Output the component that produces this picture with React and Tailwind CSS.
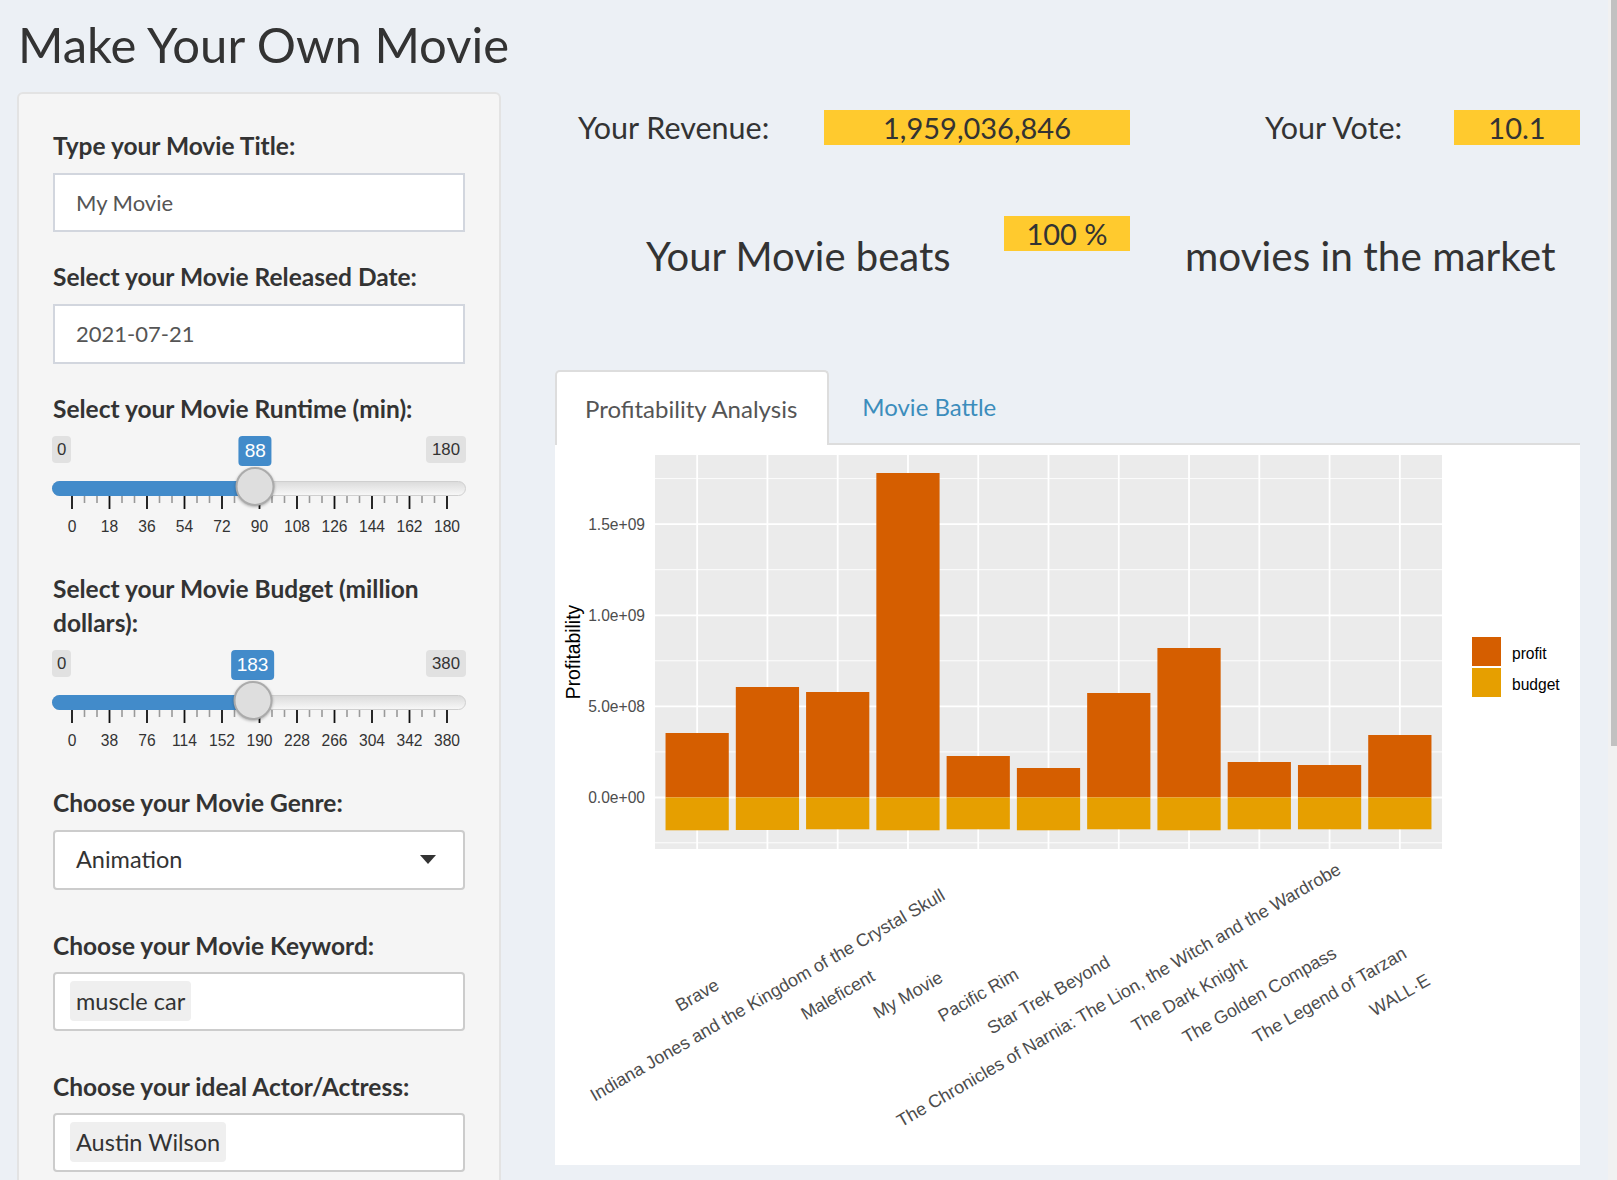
import React from 'react';

const movies = [
  { name: 'Brave', top: 731, bottom: 828.3 },
  { name: 'Indiana Jones and the Kingdom of the Crystal Skull', top: 685, bottom: 828 },
  { name: 'Maleficent', top: 690, bottom: 827.3 },
  { name: 'My Movie', top: 471, bottom: 828.3 },
  { name: 'Pacific Rim', top: 754, bottom: 827.3 },
  { name: 'Star Trek Beyond', top: 766, bottom: 828.3 },
  { name: 'The Chronicles of Narnia: The Lion, the Witch and the Wardrobe', top: 691, bottom: 827.3 },
  { name: 'The Dark Knight', top: 646, bottom: 828.3 },
  { name: 'The Golden Compass', top: 760, bottom: 827.3 },
  { name: 'The Legend of Tarzan', top: 763, bottom: 827.3 },
  { name: 'WALL·E', top: 733, bottom: 827.3 },
];

const Label = ({ children }) => (
  <label className="block text-[24.5px] font-bold leading-[34px] text-[#333]">{children}</label>
);

// ion.rangeSlider look-alike
const Slider = ({ min, max, value, ticks }) => {
  const frac = (value - min) / (max - min);
  const hx = 19 + 375 * frac;
  return (
    <div className="relative h-[108px] w-[412px]">
      <span className="absolute left-[-1px] top-0 h-[27px] rounded-[4px] bg-[#e1e1e1] px-[5px] font-['Liberation_Sans',Arial,sans-serif] text-[16.8px] leading-[27px] text-[#333]">
        {min}
      </span>
      <span className="absolute right-[-1px] top-0 h-[27px] rounded-[4px] bg-[#e1e1e1] px-[6px] font-['Liberation_Sans',Arial,sans-serif] text-[16.8px] leading-[27px] text-[#333]">
        {max}
      </span>
      <span
        className="absolute top-0 h-[30px] -translate-x-1/2 rounded-[4px] bg-[#428bca] px-[6px] font-['Liberation_Sans',Arial,sans-serif] text-[19px] leading-[30px] text-white"
        style={{ left: hx }}
      >
        {value}
      </span>
      <div className="absolute left-[-1px] top-[45px] h-[15px] w-[414px] rounded-full border border-[#cfcfcf] bg-gradient-to-b from-[#dcdcdc] to-[#f7f7f7]" />
      <div className="absolute left-[-1px] top-[45px] h-[15px] rounded-l-full bg-[#428bca]" style={{ width: hx + 1 }} />
      <svg className="absolute left-0 top-[60px]" width="412" height="14">
        {ticks.map((t, i) => (
          <g key={t}>
            <line x1={19 + 37.5 * i} x2={19 + 37.5 * i} y1="0" y2="13" stroke="#111" strokeWidth="1.8" />
            {i < ticks.length - 1 && (
              <>
                <line x1={19 + 37.5 * i + 12.5} x2={19 + 37.5 * i + 12.5} y1="0" y2="7" stroke="#999" strokeWidth="1.6" />
                <line x1={19 + 37.5 * i + 25} x2={19 + 37.5 * i + 25} y1="0" y2="7" stroke="#999" strokeWidth="1.6" />
              </>
            )}
          </g>
        ))}
      </svg>
      <div className="absolute left-[0.25px] top-[81px] flex font-['Liberation_Sans',Arial,sans-serif] text-[15.6px] leading-[20px] text-[#333]">
        {ticks.map((t) => (
          <span key={t} className="w-[37.5px] text-center">{t}</span>
        ))}
      </div>
      <div
        className="absolute top-[31px] h-[39px] w-[39px] -translate-x-1/2 rounded-full border-2 border-[#ababab] bg-[#dedede] shadow-[0_1px_3px_rgba(0,0,0,0.3)]"
        style={{ left: hx }}
      />
    </div>
  );
};

const TextBox = ({ children, h = 'h-[59px]' }) => (
  <div className={`${h} flex w-[412px] items-center border-2 border-[#d2d6de] bg-white pl-[21px] text-[22px] text-[#555]`}>
    {children}
  </div>
);

const ChipBox = ({ children }) => (
  <div className="flex h-[59px] w-[412px] items-center rounded-[4px] border-2 border-[#cccccc] bg-white pl-[15px]">
    <span className="rounded-[4px] bg-[#efefef] px-[6px] text-[23.5px] leading-[40px] text-[#333]">{children}</span>
  </div>
);

const Chart = () => {
  const step = 787 / 11.2;
  const cx = (i) => 100 + step * (0.6 + i);
  const bw = step * 0.9;
  const zero = 352.5;
  const majors = [352.5, 261.4, 170.3, 79.2];
  const minors = [397.8, 306.9, 215.8, 124.7, 33.6];
  const yl = ['0.0e+00', '5.0e+08', '1.0e+09', '1.5e+09'];
  return (
    <svg width="1025" height="720" className="block" fontFamily="'Liberation Sans', Arial, sans-serif">
      <rect x="100" y="10" width="787" height="394" fill="#ebebeb" />
      {minors.map((y) => (
        <line key={y} x1="100" x2="887" y1={y} y2={y} stroke="#fff" strokeWidth="0.9" />
      ))}
      {majors.map((y) => (
        <line key={y} x1="100" x2="887" y1={y} y2={y} stroke="#fff" strokeWidth="1.8" />
      ))}
      {movies.map((m, i) => (
        <line key={m.name} x1={cx(i)} x2={cx(i)} y1="10" y2="404" stroke="#fff" strokeWidth="1.8" />
      ))}
      {movies.map((m, i) => (
        <g key={m.name}>
          <rect x={cx(i) - bw / 2} y={m.top - 443} width={bw} height={zero - (m.top - 443)} fill="#d55e00" />
          <rect x={cx(i) - bw / 2} y={zero} width={bw} height={m.bottom - 443 - zero} fill="#e69f00" />
        </g>
      ))}
      {majors.map((y, i) => (
        <text key={y} x="90" y={y} textAnchor="end" dominantBaseline="central" fontSize="15.6" fill="#4d4d4d">
          {yl[i]}
        </text>
      ))}
      <text x="18" y="207" transform="rotate(-90 18 207)" textAnchor="middle" dominantBaseline="central" fontSize="19.3" fill="#000">
        Profitability
      </text>
      {movies.map((m, i) => (
        <text
          key={m.name}
          x={cx(i)}
          y="550"
          transform={`rotate(-30 ${cx(i)} 550)`}
          textAnchor="middle"
          dominantBaseline="central"
          fontSize="17.9"
          fill="#4d4d4d"
        >
          {m.name}
        </text>
      ))}
      <rect x="917" y="192" width="29" height="29" fill="#d55e00" />
      <rect x="917" y="223" width="29" height="29" fill="#e69f00" />
      <text x="957" y="208" dominantBaseline="central" fontSize="15.6" fill="#000">profit</text>
      <text x="957" y="239" dominantBaseline="central" fontSize="15.6" fill="#000">budget</text>
    </svg>
  );
};

export default function App() {
  return (
    <div className="flex h-[1180px] w-[1617px] overflow-hidden bg-[#ecf0f5] font-[Lato,sans-serif] text-[#333]">
      <div className="w-[1608px] shrink-0">
        <div className="h-[92px] pl-[18px] pt-[19px]">
          <h1 className="text-[49px] font-normal leading-[50px] text-[#333]">Make Your Own Movie</h1>
        </div>

        <div className="flex items-start">
          {/* sidebar */}
          <aside className="ml-[17px] w-[484px] rounded-[6px] border-2 border-[#e3e3e3] bg-[#f5f5f5] px-[34px] pb-[40px] pt-[35px]">
            <Label>Type your Movie Title:</Label>
            <div className="mt-[9.5px]">
              <TextBox>My Movie</TextBox>
            </div>

            <div className="mt-[28.5px]">
              <Label>Select your Movie Released Date:</Label>
            </div>
            <div className="mt-[9.5px]">
              <TextBox h="h-[60px]">2021-07-21</TextBox>
            </div>

            <div className="mt-[28.5px]">
              <Label>Select your Movie Runtime (min):</Label>
            </div>
            <div className="mt-[9.5px]">
              <Slider min={0} max={180} value={88} ticks={[0, 18, 36, 54, 72, 90, 108, 126, 144, 162, 180]} />
            </div>

            <div className="mt-[28.5px] w-[412px]">
              <Label>Select your Movie Budget (million dollars):</Label>
            </div>
            <div className="mt-[9.5px]">
              <Slider min={0} max={380} value={183} ticks={[0, 38, 76, 114, 152, 190, 228, 266, 304, 342, 380]} />
            </div>

            <div className="mt-[28.5px]">
              <Label>Choose your Movie Genre:</Label>
            </div>
            <div className="mt-[9.5px] flex h-[60px] w-[412px] items-center justify-between rounded-[4px] border-2 border-[#cccccc] bg-white pl-[21px] pr-[27px] text-[23.5px] text-[#333]">
              <span>Animation</span>
              <span className="h-0 w-0 border-x-[8px] border-t-[9px] border-x-transparent border-t-[#333]" />
            </div>

            <div className="mt-[39.5px]">
              <Label>Choose your Movie Keyword:</Label>
            </div>
            <div className="mt-[8.5px]">
              <ChipBox>muscle car</ChipBox>
            </div>

            <div className="mt-[39.5px]">
              <Label>Choose your ideal Actor/Actress:</Label>
            </div>
            <div className="mt-[8.5px]">
              <ChipBox>Austin Wilson</ChipBox>
            </div>
          </aside>

          {/* main */}
          <main className="ml-[54px] w-[1025px]">
            <div className="mt-[18px] flex h-[35px] items-center text-[30.5px] leading-[35px]">
              <div className="w-[269px] pl-[23px]">Your Revenue:</div>
              <div className="w-[306px] bg-[#ffca2e] text-center text-[29px]">1,959,036,846</div>
              <div className="w-[324px] pl-[135px]">Your Vote:</div>
              <div className="w-[126px] bg-[#ffca2e] text-center text-[29px]">10.1</div>
            </div>

            <div className="mt-[71px] flex items-start">
              <div className="mt-[10px] w-[449px] pl-[91px] text-[40px] leading-[60px]">Your Movie beats</div>
              <div className="h-[35px] w-[126px] bg-[#ffca2e] text-center text-[29px] leading-[35px]">100 %</div>
              <div className="mt-[10px] w-[450px] pl-[55px] text-[40.5px] leading-[60px]">movies in the market</div>
            </div>

            <div className="mt-[84px] flex items-end border-b-2 border-[#dddddd]">
              <div className="-mb-[2px] flex h-[75px] items-center rounded-t-[5px] border-2 border-b-0 border-[#dddddd] bg-white pl-[28px] pr-[30px] text-[24px] text-[#555]">
                Profitability Analysis
              </div>
              <div className="flex h-[73px] items-center px-[33px] text-[24px] text-[#3c8dbc]">Movie Battle</div>
            </div>
            <div className="h-[720px] bg-white">
              <Chart />
            </div>
          </main>
        </div>
      </div>

      {/* scrollbar */}
      <div className="w-[9px] shrink-0 bg-[#f1f1f1]">
        <div className="ml-[3px] h-[746px] w-[6px] bg-[#c1c1c1]" />
      </div>
    </div>
  );
}
